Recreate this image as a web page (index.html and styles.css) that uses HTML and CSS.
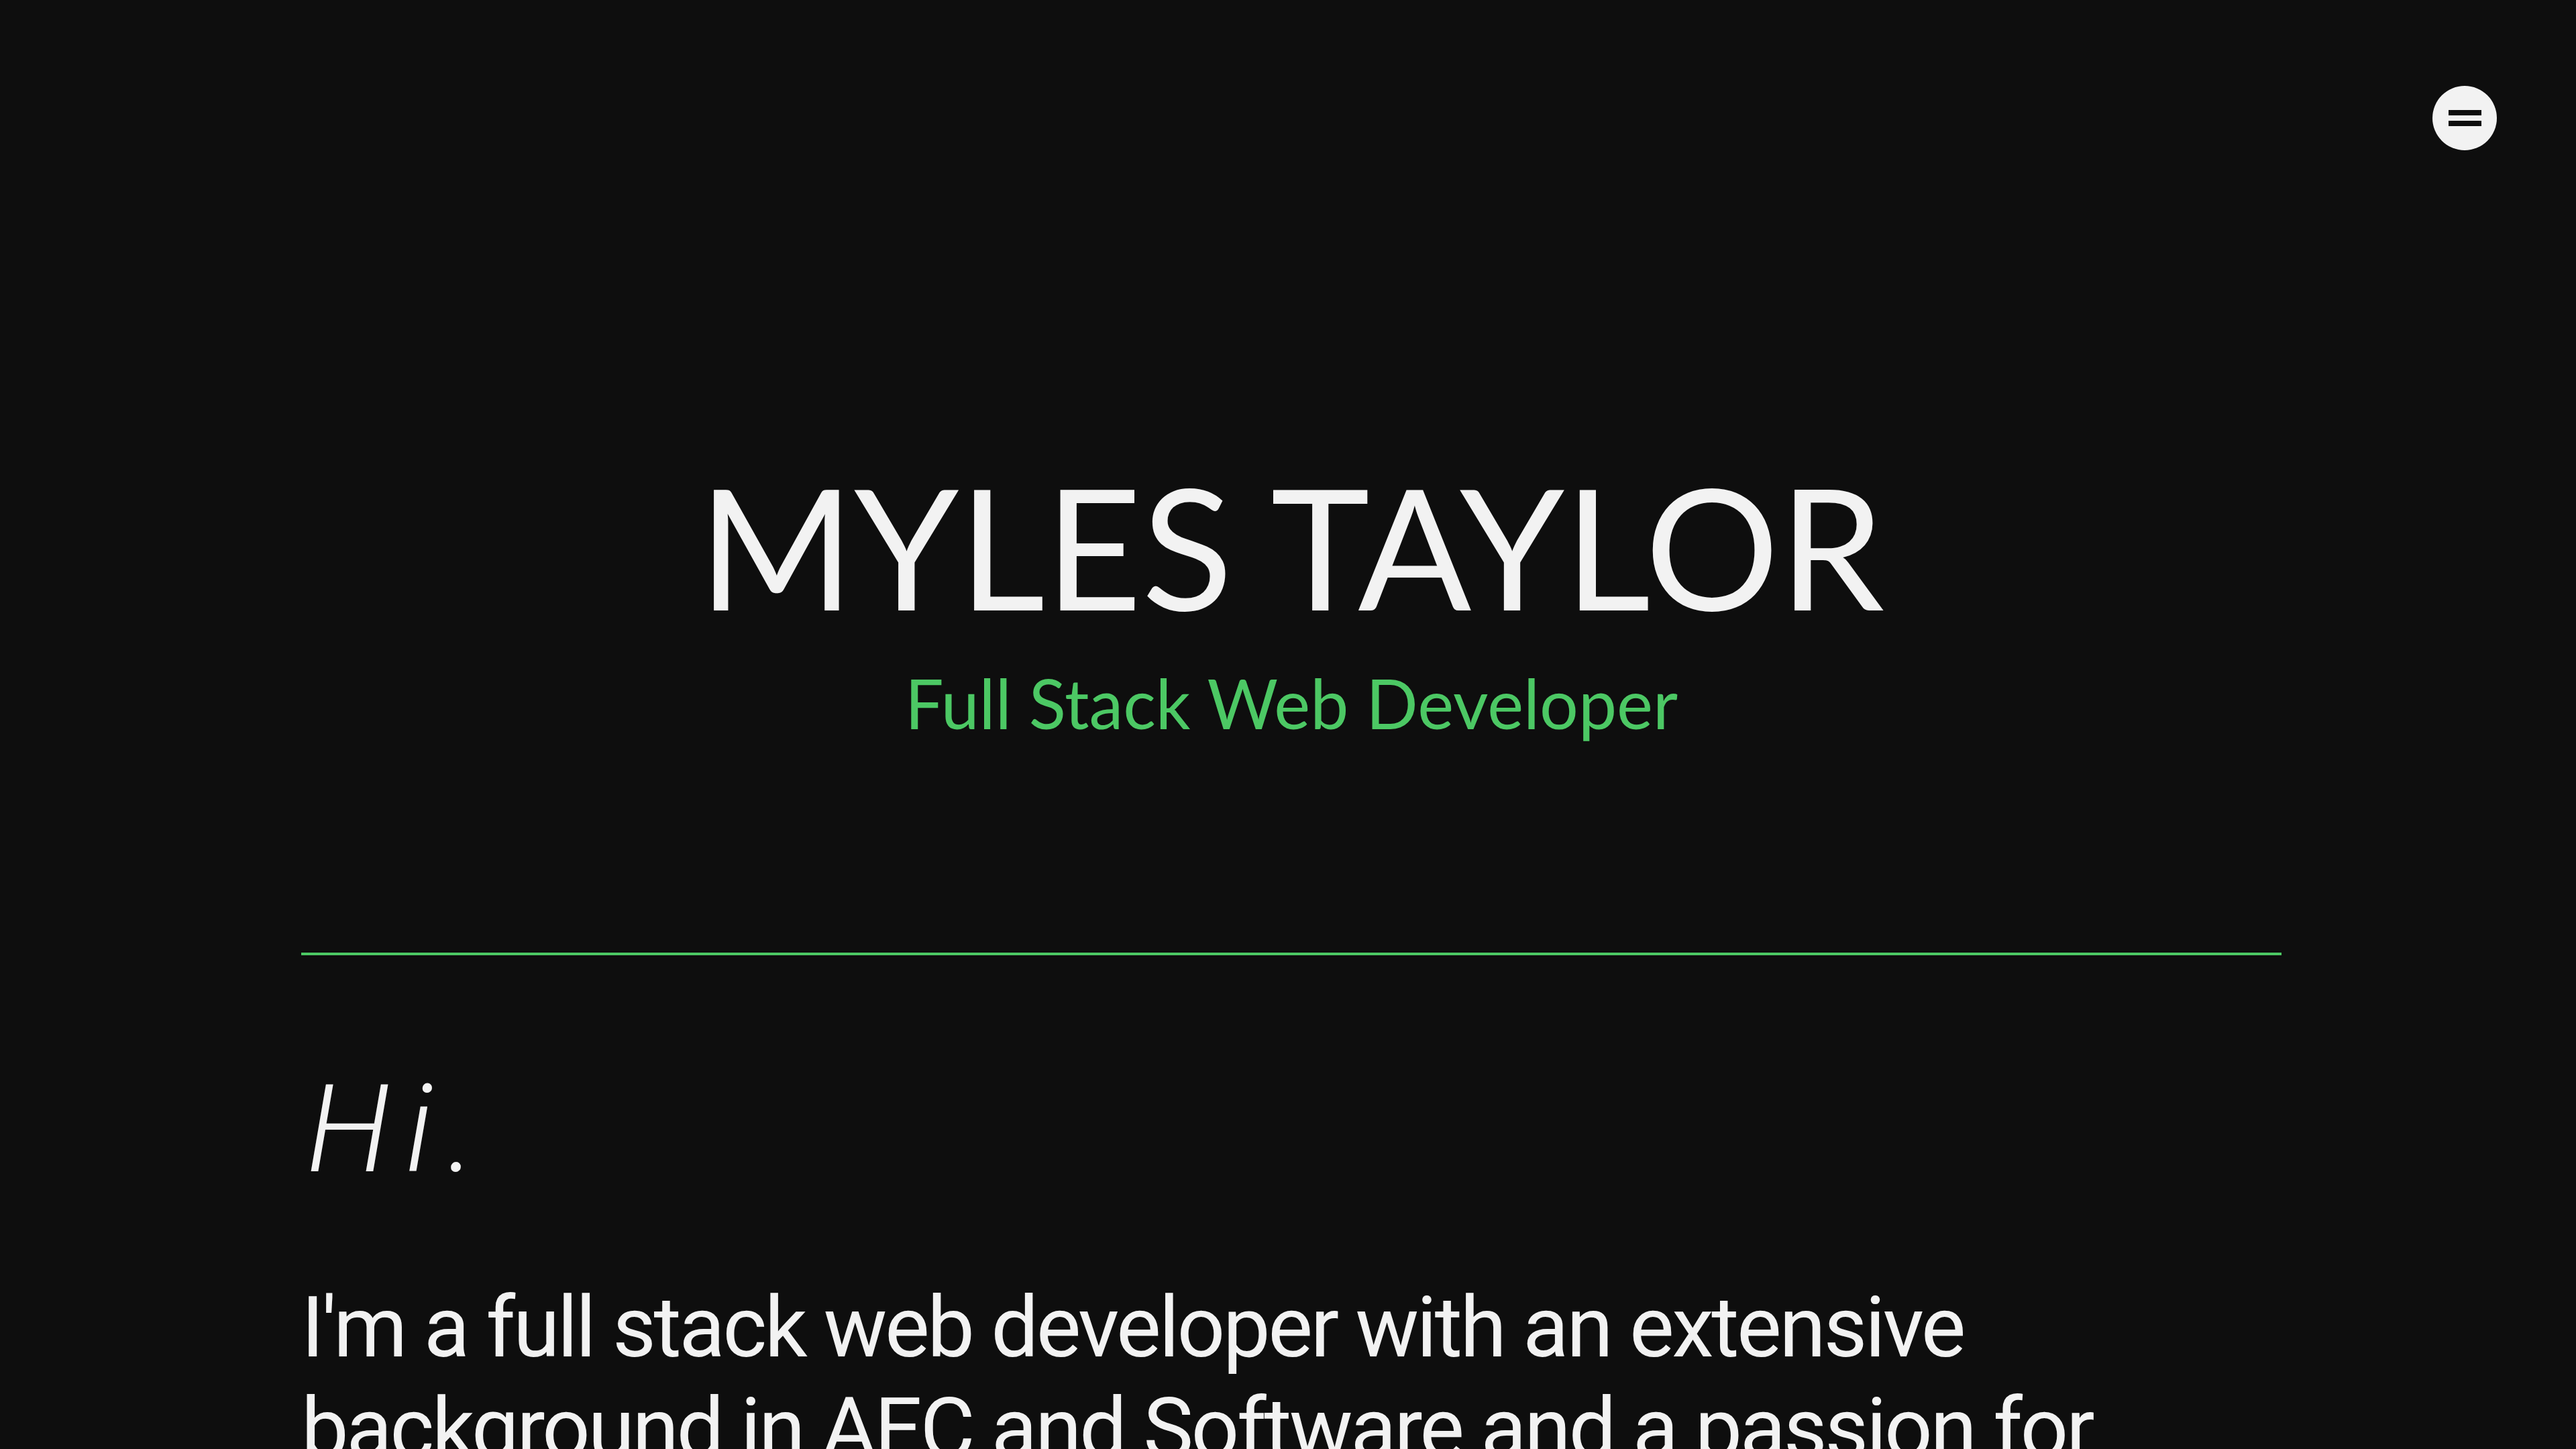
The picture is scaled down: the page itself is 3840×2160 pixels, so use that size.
FILE: index.html
```html
<!DOCTYPE html>
<html lang="en">
<head>
<meta charset="utf-8">
<title>Myles Taylor</title>
<link rel="stylesheet" href="styles.css">
</head>
<body>
<button class="menu-btn" aria-label="Menu">
  <span class="menu-bar"></span>
  <span class="menu-bar"></span>
</button>
<main class="page">
  <header class="hero">
    <h1 class="hero-title">MYLES TAYLOR</h1>
    <p class="hero-subtitle">Full Stack Web Developer</p>
  </header>
  <hr class="divider">
  <section class="about">
    <h2 class="about-greeting">Hi.</h2>
    <p class="about-text">I'm a full stack web developer with an extensive background in AEC and Software and a passion for building elegant, useful tools.</p>
  </section>
</main>
</body>
</html>
```

FILE: styles.css
```css
html, body {
  margin: 0;
  padding: 0;
  background: #0e0e0e;
  color: #f2f2f2;
}

body {
  font-family: Roboto, "Noto Sans", sans-serif;
  overflow: hidden;
  height: 2160px;
}

.menu-btn {
  position: absolute;
  top: 128px;
  left: 3626px;
  width: 96px;
  height: 96px;
  border-radius: 50%;
  border: none;
  padding: 0;
  background: #f2f2f2;
  display: flex;
  flex-direction: column;
  align-items: center;
  justify-content: center;
  gap: 8px;
  cursor: pointer;
}

.menu-bar {
  display: block;
  width: 49px;
  height: 8px;
  background: #0e0e0e;
}

.page {
  padding: 0 439px 0 449px;
}

.hero {
  padding-top: 688px;
  text-align: center;
}

.hero-title {
  margin: 0;
  font-family: Lato, "Open Sans", sans-serif;
  font-weight: 400;
  font-size: 250px;
  line-height: 1;
  letter-spacing: 0;
}

.hero-subtitle {
  margin: 59px 0 0;
  font-family: Lato, "Open Sans", sans-serif;
  font-weight: 400;
  font-size: 102px;
  line-height: 1;
  color: #4cc864;
}

.divider {
  margin: 321px 0 0;
  border: none;
  height: 4px;
  background: #4cc864;
}

.about-greeting {
  margin: 170px 0 0;
  padding-left: 8px;
  font-family: Roboto, sans-serif;
  font-style: italic;
  font-weight: 300;
  font-size: 181px;
  line-height: 1;
  letter-spacing: 0.13em;
}

.about-text {
  margin: 129px 0 0;
  font-family: Roboto, sans-serif;
  font-weight: 400;
  font-size: 126px;
  line-height: 151px;
  letter-spacing: -3.5px;
}
```
